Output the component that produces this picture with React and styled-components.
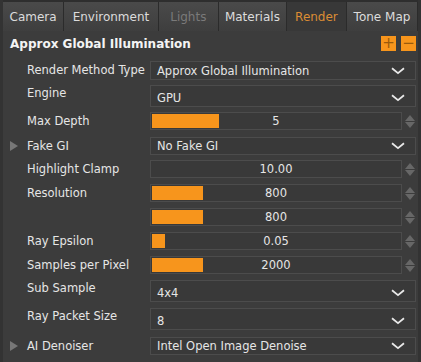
import React from "react";
import styled, { createGlobalStyle } from "styled-components";

const GlobalStyle = createGlobalStyle`
  body {
    margin: 0;
    background: #3c3c3c;
    font-family: "DejaVu Sans", Verdana, sans-serif;
  }
`;

const ORANGE = "#f7951c";

const Panel = styled.div`
  width: 421px;
  height: 362px;
  box-sizing: border-box;
  background: #3c3c3c;
  border-left: 3px solid #333;
  border-right: 3px solid #333;
  overflow: hidden;
  color: #e6e6e6;
`;

const TabBar = styled.div`
  display: flex;
  height: 31px;
  box-sizing: border-box;
  padding-top: 2px;
  background: #2e2e2e;
`;

const Tab = styled.div`
  width: ${(p) => p.$w}px;
  display: flex;
  align-items: center;
  justify-content: center;
  font-size: 12px;
  border-right: 1px solid #2b2b2b;
  background: ${(p) =>
    p.$active ? "#383838" : "linear-gradient(#4a4a4a, #3e3e3e)"};
  color: ${(p) => (p.$active ? "#db8c34" : p.$disabled ? "#7a7a7a" : "#dcdcdc")};
`;

const Header = styled.div`
  height: 25px;
  display: flex;
  align-items: center;
  justify-content: space-between;
  padding: 0 2px 0 7px;
`;

const Title = styled.span`
  font-size: 12px;
  font-weight: bold;
  color: #f4f4f4;
`;

const HeaderButtons = styled.div`
  display: flex;
  gap: 5px;
`;

const SquareButton = styled.div`
  width: 15px;
  height: 15px;
  background: ${ORANGE};
  color: #9a5a0c;
  font-size: 15px;
  line-height: 14px;
  text-align: center;
`;

const Rows = styled.div`
  padding-top: 5px;
`;

const Row = styled.div`
  display: flex;
  height: ${(p) => p.$pitch}px;
`;

const Expander = styled.div`
  width: 24px;
  height: 18px;
  display: flex;
  align-items: center;
  padding-left: 7px;
  box-sizing: border-box;
`;

const Arrow = styled.div`
  width: 0;
  height: 0;
  border-left: 8px solid #777;
  border-top: 5px solid transparent;
  border-bottom: 5px solid transparent;
`;

const Label = styled.div`
  width: 123px;
  font-size: 11.5px;
  height: ${(p) => (p.$tall ? 16 : p.$h)}px;
  line-height: ${(p) => (p.$tall ? 16 : p.$h)}px;
  white-space: nowrap;
`;

const Dropdown = styled.div`
  width: 266px;
  height: ${(p) => p.$h}px;
  box-sizing: border-box;
  border: 1px solid #4c4c4c;
  background: #393939;
  display: flex;
  align-items: center;
  justify-content: space-between;
  padding: ${(p) => (p.$tall ? 4 : 0)}px 10px 0 6px;
  font-size: 11.5px;
`;

const NumberWrap = styled.div`
  display: flex;
  align-items: center;
  height: ${(p) => p.$h}px;
`;

const NumberField = styled.div`
  position: relative;
  width: 252px;
  height: 100%;
  box-sizing: border-box;
  border: 1px solid #4c4c4c;
  background: #393939;
  display: flex;
  align-items: center;
  justify-content: center;
  font-size: 11.5px;
`;

const Fill = styled.div`
  position: absolute;
  left: 1px;
  top: 1px;
  bottom: 1px;
  background: ${ORANGE};
`;

const Value = styled.span`
  position: relative;
`;

const Spinner = styled.div`
  display: flex;
  flex-direction: column;
  gap: 1px;
  margin-left: 3px;
`;

const Up = styled.div`
  width: 0;
  height: 0;
  border-left: 5px solid transparent;
  border-right: 5px solid transparent;
  border-bottom: 6px solid #676767;
`;

const Down = styled(Up)`
  border-bottom: none;
  border-top: 6px solid #676767;
`;

const Chevron = () => (
  <svg width="14" height="8" viewBox="0 0 14 8">
    <polyline
      points="1,1.2 7,6.2 13,1.2"
      fill="none"
      stroke="#e8e8e8"
      strokeWidth="1.8"
    />
  </svg>
);

const tabs = [
  { name: "Camera", w: 61 },
  { name: "Environment", w: 95 },
  { name: "Lights", w: 60, disabled: true },
  { name: "Materials", w: 68 },
  { name: "Render", w: 60, active: true },
  { name: "Tone Map", w: 71 },
];

const rows = [
  { label: "Render Method Type", type: "drop", value: "Approx Global Illumination", h: 19, pitch: 24 },
  { label: "Engine", type: "drop", value: "GPU", h: 22, pitch: 27, tall: true },
  { label: "Max Depth", type: "num", value: "5", fill: 67, h: 18, pitch: 25 },
  { label: "Fake GI", type: "drop", value: "No Fake GI", h: 18, pitch: 23, expand: true },
  { label: "Highlight Clamp", type: "num", value: "10.00", fill: 0, h: 18, pitch: 24 },
  { label: "Resolution", type: "num", value: "800", fill: 51, h: 18, pitch: 24 },
  { label: "", type: "num", value: "800", fill: 51, h: 18, pitch: 24 },
  { label: "Ray Epsilon", type: "num", value: "0.05", fill: 13, h: 18, pitch: 24 },
  { label: "Samples per Pixel", type: "num", value: "2000", fill: 51, h: 18, pitch: 24 },
  { label: "Sub Sample", type: "drop", value: "4x4", h: 22, pitch: 28, tall: true },
  { label: "Ray Packet Size", type: "drop", value: "8", h: 22, pitch: 29, tall: true },
  { label: "AI Denoiser", type: "drop", value: "Intel Open Image Denoise", h: 18, pitch: 24, expand: true },
];

const App = () => (
  <>
    <GlobalStyle />
    <Panel>
      <TabBar>
        {tabs.map((t) => (
          <Tab key={t.name} $w={t.w} $active={t.active} $disabled={t.disabled}>
            {t.name}
          </Tab>
        ))}
      </TabBar>
      <Header>
        <Title>Approx Global Illumination</Title>
        <HeaderButtons>
          <SquareButton>+</SquareButton>
          <SquareButton>−</SquareButton>
        </HeaderButtons>
      </Header>
      <Rows>
        {rows.map((r, i) => (
          <Row key={i} $pitch={r.pitch}>
            <Expander>{r.expand && <Arrow />}</Expander>
            <Label $h={r.h} $tall={r.tall}>{r.label}</Label>
            {r.type === "drop" ? (
              <Dropdown $h={r.h} $tall={r.tall}>
                <span>{r.value}</span>
                <Chevron />
              </Dropdown>
            ) : (
              <NumberWrap $h={r.h}>
                <NumberField>
                  {r.fill > 0 && <Fill style={{ width: r.fill }} />}
                  <Value>{r.value}</Value>
                </NumberField>
                <Spinner>
                  <Up />
                  <Down />
                </Spinner>
              </NumberWrap>
            )}
          </Row>
        ))}
      </Rows>
    </Panel>
  </>
);

export default App;
